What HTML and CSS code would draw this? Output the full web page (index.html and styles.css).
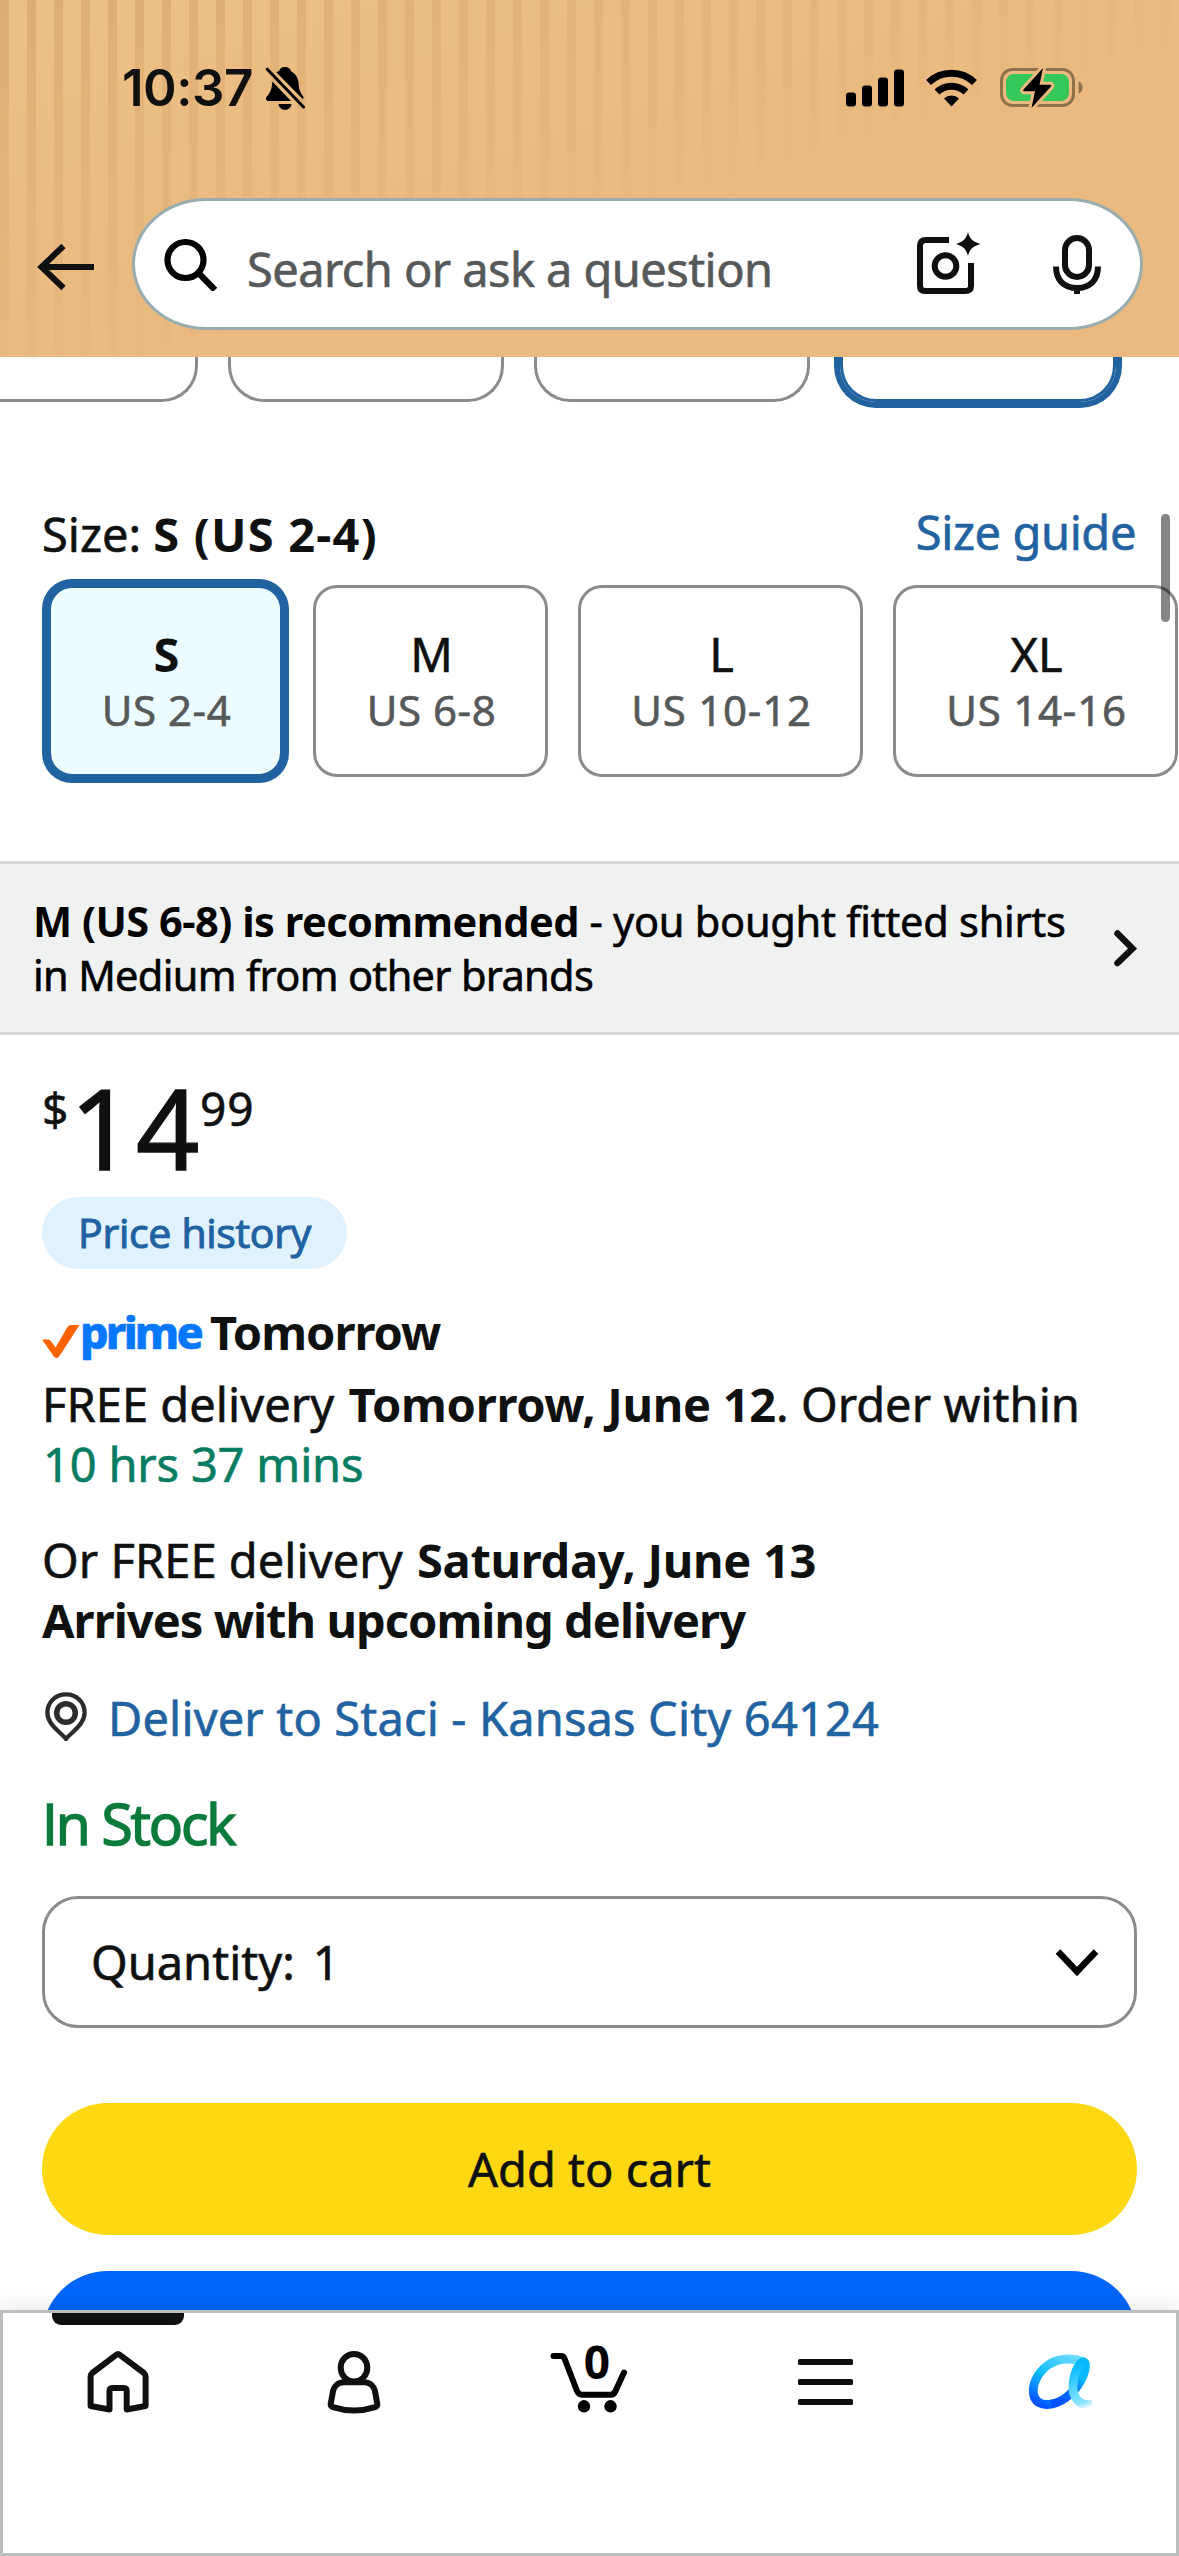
FILE: index.html
```html
<!DOCTYPE html>
<html lang="en">
<head>
<meta charset="utf-8">
<title>Product</title>
<link rel="stylesheet" href="styles.css">
</head>
<body>
<header class="header">
  <div class="status">
    <div class="status-left">
      <span class="clock">10:37</span>
      <svg class="bell" width="40" height="44" viewBox="0 0 40 44">
        <path d="M20 1c3.500 0 5.500 1.700 6 4.200 4.500 2.200 7.300 6.600 7.600 12 .3 6 1.200 9 4.800 13.200l-.2 3L11.500 6.500c1-.7 1.800-1.100 2.700-1.400C14.600 2.600 16.500 1 20 1z"/>
        <path d="M7.300 15.500L26 35H3.500C1 35 .2 32.500 1.800 30.500 5.500 26.500 7 22.500 7.300 15.500zM13.500 38h13c-.5 3.600-3.200 5.800-6.500 5.800s-6-2.200-6.500-5.800z"/>
        <path d="M2.300 3.200L38.500 41" stroke="#000" stroke-width="3" stroke-linecap="round"/>
      </svg>
    </div>
    <div class="status-right">
      <svg width="58" height="38" viewBox="0 0 58 38">
        <rect x="0" y="23.500" width="10" height="14" rx="3"/><rect x="16" y="16.500" width="10" height="21" rx="3"/><rect x="32" y="8.500" width="10" height="29" rx="3"/><rect x="48" y=".5" width="10" height="37" rx="3"/>
      </svg>
      <svg width="51" height="38" viewBox="0 0 51 38" fill="none" stroke="#000" stroke-width="7">
        <path d="M2.500 13.500a33 33 0 0 1 46 0"/><path d="M11 23a21 21 0 0 1 29 0"/>
        <path d="M18 29.500a11 11 0 0 1 15 0L25.500 37.500z" fill="#000" stroke="none"/>
      </svg>
      <svg width="84" height="42" viewBox="0 0 84 42">
        <rect x="2.500" y="2.500" width="72" height="36" rx="11" fill="none" stroke="#8f714c" stroke-width="3"/>
        <path d="M79.500 14.500c3 1 4 3.500 4 6s-1 5-4 6z" fill="#8f714c"/>
        <rect x="7" y="7" width="63" height="27" rx="8" fill="#35c759"/>
        <path d="M44 1L24.500 22.500a1 1 0 0 0 .8 1.700H36L32.500 41 52 19.500a1 1 0 0 0-.8-1.700H40.500z" fill="#000" stroke="#ecba81" stroke-width="6" paint-order="stroke" stroke-linejoin="round"/>
      </svg>
    </div>
  </div>
  <div class="search-row">
    <svg class="back" width="58" height="48" viewBox="0 0 58 48" fill="none" stroke="#0f1111" stroke-width="6">
      <path d="M26.500 3L4.500 24l22 21M4 24h53"/>
    </svg>
    <div class="search">
      <svg class="lens" width="54" height="54" viewBox="0 0 54 54" fill="none" stroke="#000" stroke-width="6.200">
        <circle cx="21.500" cy="23" r="18"/><path d="M35 36.500L51 53"/>
      </svg>
      <span class="placeholder">Search or ask a question</span>
      <svg class="camera" width="66" height="64" viewBox="0 0 66 64" fill="none" stroke="#0f1111" stroke-width="6">
        <path d="M33 8H10q-6 0-6 6v40q0 5 5 5h40q6 0 6-5V31"/>
        <circle cx="29.500" cy="34" r="10.800"/>
        <path d="M52 0c2 7 4.500 9.500 12.500 12-8 2.500-10.500 5-12.500 12-2-7-4.500-9.500-12-12 7.500-2.500 10-5 12-12z" fill="#0f1111" stroke="none"/>
      </svg>
      <svg class="mic" width="50" height="60" viewBox="0 0 50 60" fill="none" stroke="#0f1111" stroke-width="6">
        <rect x="12" y="4" width="24" height="39" rx="12"/><path d="M3 32.500C3 46 11 54 24 54s21-8 21-21.500M24 53v7"/>
      </svg>
    </div>
  </div>
</header>

<main class="main">
  <div class="colors">
    <div class="swatch"></div><div class="swatch"></div><div class="swatch"></div><div class="swatch selected"></div>
  </div>

  <div class="size-head">
    <div class="size-label">Size: <b>S (US 2-4)</b></div>
    <a class="size-guide">Size guide</a>
  </div>
  <div class="sizes">
    <div class="size selected"><b>S</b><small>US 2-4</small></div>
    <div class="size"><span>M</span><small>US 6-8</small></div>
    <div class="size wide"><span>L</span><small class="loose">US 10-12</small></div>
    <div class="size wide"><span>XL</span><small class="loose">US 14-16</small></div>
  </div>

  <div class="banner">
    <div class="banner-text"><b>M (US 6-8) is recommended</b> - you bought fitted shirts<br><span class="tight">in Medium from other brands</span></div>
    <svg width="24" height="38" viewBox="0 0 24 38" fill="none" stroke="#0f1111" stroke-width="6.500" stroke-linecap="round">
      <path d="M4.500 4.500L19.500 19.500 4.500 34"/>
    </svg>
  </div>

  <div class="content">
    <div class="price"><span class="sym">$</span><span class="whole">14</span><span class="cents">99</span></div>
    <div class="pill">Price history</div>

    <div class="prime-row">
      <svg width="38" height="34" viewBox="0 0 38 34"><path d="M0 14.500h6q2 0 3 1.700l4.500 6.300L25.500 2q1.300-2 3.500-2h8.500L17.500 31q-3 4-6 0z" fill="#ff6200"/></svg>
      <span class="prime">prime</span>
      <b>Tomorrow</b>
    </div>
    <p class="delivery">FREE delivery <b>Tomorrow, June 12</b>. Order within<br><span class="countdown">10 hrs 37 mins</span></p>
    <p class="delivery later">Or FREE delivery <b>Saturday, June 13</b><br><b class="arrives">Arrives with upcoming delivery</b></p>

    <div class="address">
      <svg width="42" height="49" viewBox="0 0 42 49" fill="none" stroke="#2b2d2d">
        <path d="M21 2.300C10 2.300 2.400 10.500 2.400 20.500c0 8.500 6 14 11.600 19.500 3 2.800 5.500 5 7 7 1.500-2 4-4.200 7-7 5.600-5.500 11.600-11 11.600-19.500C39.600 10.500 32 2.300 21 2.300z" stroke-width="4.300"/>
        <circle cx="21" cy="21" r="9.300" stroke-width="5.500"/>
      </svg>
      <a>Deliver to Staci - Kansas City 64124</a>
    </div>
    <div class="stock">In Stock</div>

    <div class="quantity">
      <span>Quantity:</span><span class="qty">1</span>
      <svg width="44" height="30" viewBox="0 0 44 30" fill="none" stroke="#000" stroke-width="6.500"><path d="M3 4.500l19 20L41 4.500"/></svg>
    </div>
    <div class="button cart-button">Add to cart</div>
    <div class="button buy-button"></div>
  </div>
  <div class="scrollbar"></div>
</main>

<nav class="nav">
  <div class="tab active">
    <svg width="90" height="80" viewBox="0 0 90 80" fill="none" stroke="#0f1111" stroke-width="6" stroke-linejoin="round">
      <path d="M43.200 14.800q1.800-1.500 3.600 0L71 33q1.600 1.300 1.600 3.200V66L53.700 69.500V51q0-3-3-3H39.500q-3 0-3 3v18.500L17.600 66V36.200q0-1.900 1.600-3.200z"/>
    </svg>
  </div>
  <div class="tab">
    <svg width="90" height="80" viewBox="0 0 90 80" fill="none" stroke="#0f1111" stroke-width="6" stroke-linejoin="round">
      <ellipse cx="45" cy="27.700" rx="13.300" ry="13.800"/>
      <path d="M35 42.300h20c6 0 10.500 4 11.300 10.700L68.300 64q.2 2.300-2.300 3.200-21 6.800-42 0-2.500-.9-2.300-3.200L23.700 53C24.500 46.300 29 42.300 35 42.300z"/>
    </svg>
  </div>
  <div class="tab">
    <svg width="90" height="80" viewBox="0 0 90 80" fill="none" stroke="#000" stroke-width="6" stroke-linecap="round" stroke-linejoin="round">
      <path d="M9.500 16H17q2.500 0 3.500 2.500L33 51q1.500 3.700 5 3.700h28.500q3.500 0 5-3.700L80 32.500"/>
      <circle cx="40" cy="66.300" r="6.200" fill="#000" stroke="none"/><circle cx="66.500" cy="66.300" r="6.200" fill="#000" stroke="none"/>
    </svg>
    <span class="count">0</span>
  </div>
  <div class="tab">
    <svg width="90" height="80" viewBox="0 0 90 80" fill="#0f1111">
      <rect x="18" y="19" width="55" height="6" rx="1.500"/><rect x="18" y="39" width="55" height="6" rx="1.500"/><rect x="18" y="59" width="55" height="6" rx="1.500"/>
    </svg>
  </div>
  <div class="tab">
    <svg width="90" height="80" viewBox="-4 0 90 80" fill="none" stroke-width="8.800">
      <defs>
        <linearGradient id="ring" gradientUnits="userSpaceOnUse" x1="52" y1="16" x2="26" y2="68"><stop offset="0" stop-color="#6adbff"/><stop offset=".5" stop-color="#0dbcff"/><stop offset=".8" stop-color="#0a7dff"/><stop offset="1" stop-color="#0050ff"/></linearGradient>
        <linearGradient id="stem" gradientUnits="userSpaceOnUse" x1="40" y1="62" x2="64" y2="24"><stop offset="0" stop-color="#0050ff"/><stop offset=".45" stop-color="#0a7dff"/><stop offset=".7" stop-color="#06baff"/></linearGradient>
        <linearGradient id="tail" gradientUnits="userSpaceOnUse" x1="58" y1="24" x2="74" y2="66"><stop offset="0" stop-color="#06baff"/><stop offset=".65" stop-color="#6fdcff"/><stop offset=".85" stop-color="#8ce4ff"/><stop offset="1" stop-color="#fff"/></linearGradient>
      </defs>
      <path d="M63 21.500C52 17.500 38 18 28 25 17 33 12 45 13.500 54 15 62 21 66 32 64" stroke="url(#ring)"/>
      <path d="M31 64.200C46 61.500 58 48 63 36 66 28 66.500 23 64 22 61 21.500 57 27 55 36" stroke="url(#stem)"/>
      <path d="M64 22C58 23 53 36 53 47 53 58 59 65.500 72 64.800" stroke="url(#tail)"/>
    </svg>
  </div>
</nav>
</body>
</html>
```
FILE: styles.css
```css
* { box-sizing: border-box; }

body {
  margin: 0;
  width: 1179px;
  height: 2556px;
  display: flex;
  flex-direction: column;
  overflow: hidden;
  background: #fff;
  color: #0f1111;
  font: 47px/60px "Noto Sans", "Open Sans", sans-serif;
  -webkit-text-stroke: .6px;
}

svg { display: block; flex: none; }
b { font-weight: 700; -webkit-text-stroke: 0; }

/* Header */
.header {
  position: relative;
  z-index: 2;
  flex: none;
  height: 357px;
  padding-top: 58px;
  background: linear-gradient(to bottom right, #edc085, #ebba81 50%, #ebb980);
}
.header::before {
  content: "";
  position: absolute;
  inset: 0;
  background: repeating-linear-gradient(90deg, #d9a66e 0 9px, transparent 9px 27px);
  -webkit-mask-image: linear-gradient(to bottom right, rgba(0, 0, 0, .72), transparent 60%);
  mask-image: linear-gradient(to bottom right, rgba(0, 0, 0, .72), transparent 60%);
}
.status, .search-row { position: relative; display: flex; align-items: center; }
.status {
  height: 60px;
  justify-content: space-between;
  padding: 0 96px 0 122px;
}
.status-left { display: flex; align-items: center; gap: 12px; }
.clock {
  font: 600 51px/60px Inter, "Liberation Sans", sans-serif;
  letter-spacing: -.5px;
  -webkit-text-stroke: 0;
}
.status-right { display: flex; align-items: center; gap: 22px; }
.search-row { margin-top: 80px; padding: 0 36px 0 37px; }
.back { margin-top: 6px; }
.search {
  display: flex;
  align-items: center;
  width: 1011px;
  height: 132px;
  margin-left: 37px;
  padding: 0 37px 0 29px;
  border: 3px solid #99adb0;
  border-radius: 74px / 66px;
  background: #fff;
}
.placeholder {
  flex: 1;
  margin: 9px 0 0 29px;
  color: #565959;
  letter-spacing: -.58px;
}
.camera { margin-right: 71px; }

/* Content */
.main {
  position: relative;
  flex: 1;
  min-height: 0;
  overflow: hidden;
}
.colors { display: flex; gap: 30px; margin-left: -78px; }
.swatch {
  flex: none;
  width: 276px;
  height: 45px;
  border: 3px solid #888c8c;
  border-top: 0;
  border-radius: 0 0 36px 36px;
}
.size-head {
  display: flex;
  justify-content: space-between;
  height: 63px;
  margin: 99px 43px 0 42px;
}
.size-label { align-self: flex-end; }
.size-label b { letter-spacing: 1.2px; }
.size-guide { margin-top: 1px; color: #2162a1; letter-spacing: -.4px; }
.sizes { display: flex; gap: 30px; margin: 21px 0 0 48px; }
.size {
  flex: none;
  width: 235px;
  height: 192px;
  padding: 37px 0 0 2px;
  border: 3px solid #888c8c;
  border-radius: 24px;
  text-align: center;
  line-height: 58px;
}
.size.wide { width: 285px; }
.size b, .size span, .size small { display: block; }
.size small {
  font-size: 42px;
  line-height: 54px;
  letter-spacing: .55px;
  color: #565959;
}
.size small.loose { letter-spacing: .8px; }
.selected {
  border-color: #2162a1;
  box-shadow: 0 0 0 6px #2162a1;
}
.size.selected { background: #ecfcff; }

.banner {
  display: flex;
  align-items: center;
  justify-content: space-between;
  height: 174px;
  margin-top: 84px;
  padding: 0 42px 1px 33px;
  border: solid #d5d9d9;
  border-width: 3px 0;
  background: #f0f2f2;
  color: #000;
}
.banner-text { font-size: 41.5px; line-height: 54px; letter-spacing: -.26px; white-space: nowrap; }
.banner-text b { letter-spacing: -.5px; }
.banner-text .tight { letter-spacing: -.67px; }

.content { padding: 36px 42px 0; }
.price { display: flex; height: 111px; }
.sym, .cents { margin-top: 7px; font-size: 46px; }
.sym { width: 28px; }
.whole { font-size: 111px; line-height: 113px; letter-spacing: 2.5px; -webkit-text-stroke: 1.4px; }
.cents { margin-left: -2px; letter-spacing: 1px; }
.pill {
  width: 305px;
  height: 72px;
  margin-top: 15px;
  border-radius: 36px;
  background: #e0f2ff;
  color: #2162a1;
  font: 500 41px/71px "Open Sans", sans-serif;
  letter-spacing: -.3px;
  text-align: center;
  -webkit-text-stroke: 1.1px;
}

.prime-row { display: flex; height: 60px; margin-top: 33px; letter-spacing: -1px; }
.prime-row svg { margin-top: 23px; }
.prime {
  width: 130px;
  font-size: 45px;
  font-weight: 800;
  color: #0578ff;
  letter-spacing: -2.8px;
}
.delivery { margin: 12px 0 0; white-space: nowrap; letter-spacing: .05px; }
.delivery b { margin-left: 2px; letter-spacing: -.3px; }
.later { margin-top: 36px; }
.countdown { margin-left: 1px; color: #067d62; letter-spacing: -.18px; }
.delivery .arrives { margin-left: 0; letter-spacing: -.95px; }

.address { display: flex; height: 60px; margin-top: 38px; }
.address svg { margin: 4px 21px 0 3px; }
.address a { color: #2162a1; letter-spacing: .15px; }
.stock {
  margin-top: 40px;
  font: 500 57px/70px "Open Sans", sans-serif;
  letter-spacing: -2.1px;
  color: #0b7b3c;
  -webkit-text-stroke: 1.6px;
}
.quantity {
  display: flex;
  align-items: center;
  height: 132px;
  margin-top: 38px;
  padding: 0 35px 0 46px;
  border: 3px solid #888c8c;
  border-radius: 36px;
}
.qty { flex: 1; margin-left: 18px; }
.button {
  height: 132px;
  border-radius: 66px;
  line-height: 132px;
  text-align: center;
}
.cart-button { margin-top: 75px; background: #ffd814; }
.buy-button { margin-top: 36px; background: #0065fb; }

.scrollbar {
  position: absolute;
  top: 157px;
  right: 9px;
  width: 9px;
  height: 108px;
  border-radius: 4.5px;
  background: rgba(0, 0, 0, .48);
}

/* Bottom navigation */
.nav {
  position: relative;
  flex: none;
  display: flex;
  height: 246px;
  background: #fff;
  box-shadow: inset 0 0 0 3px #bbbfbf, 0 0 24px rgba(15, 17, 17, .12);
}
.tab {
  position: relative;
  flex: 1;
  display: flex;
  justify-content: center;
  padding-top: 30px;
}
.active::before {
  content: "";
  position: absolute;
  top: 3px;
  left: 52px;
  width: 132px;
  height: 12px;
  border-radius: 0 0 9px 9px;
  background: #0f1111;
}
.count {
  position: absolute;
  top: 21px;
  left: 0;
  right: -15px;
  font-size: 46px;
  font-weight: 700;
  text-align: center;
  color: #000;
  -webkit-text-stroke: 0;
}
```
